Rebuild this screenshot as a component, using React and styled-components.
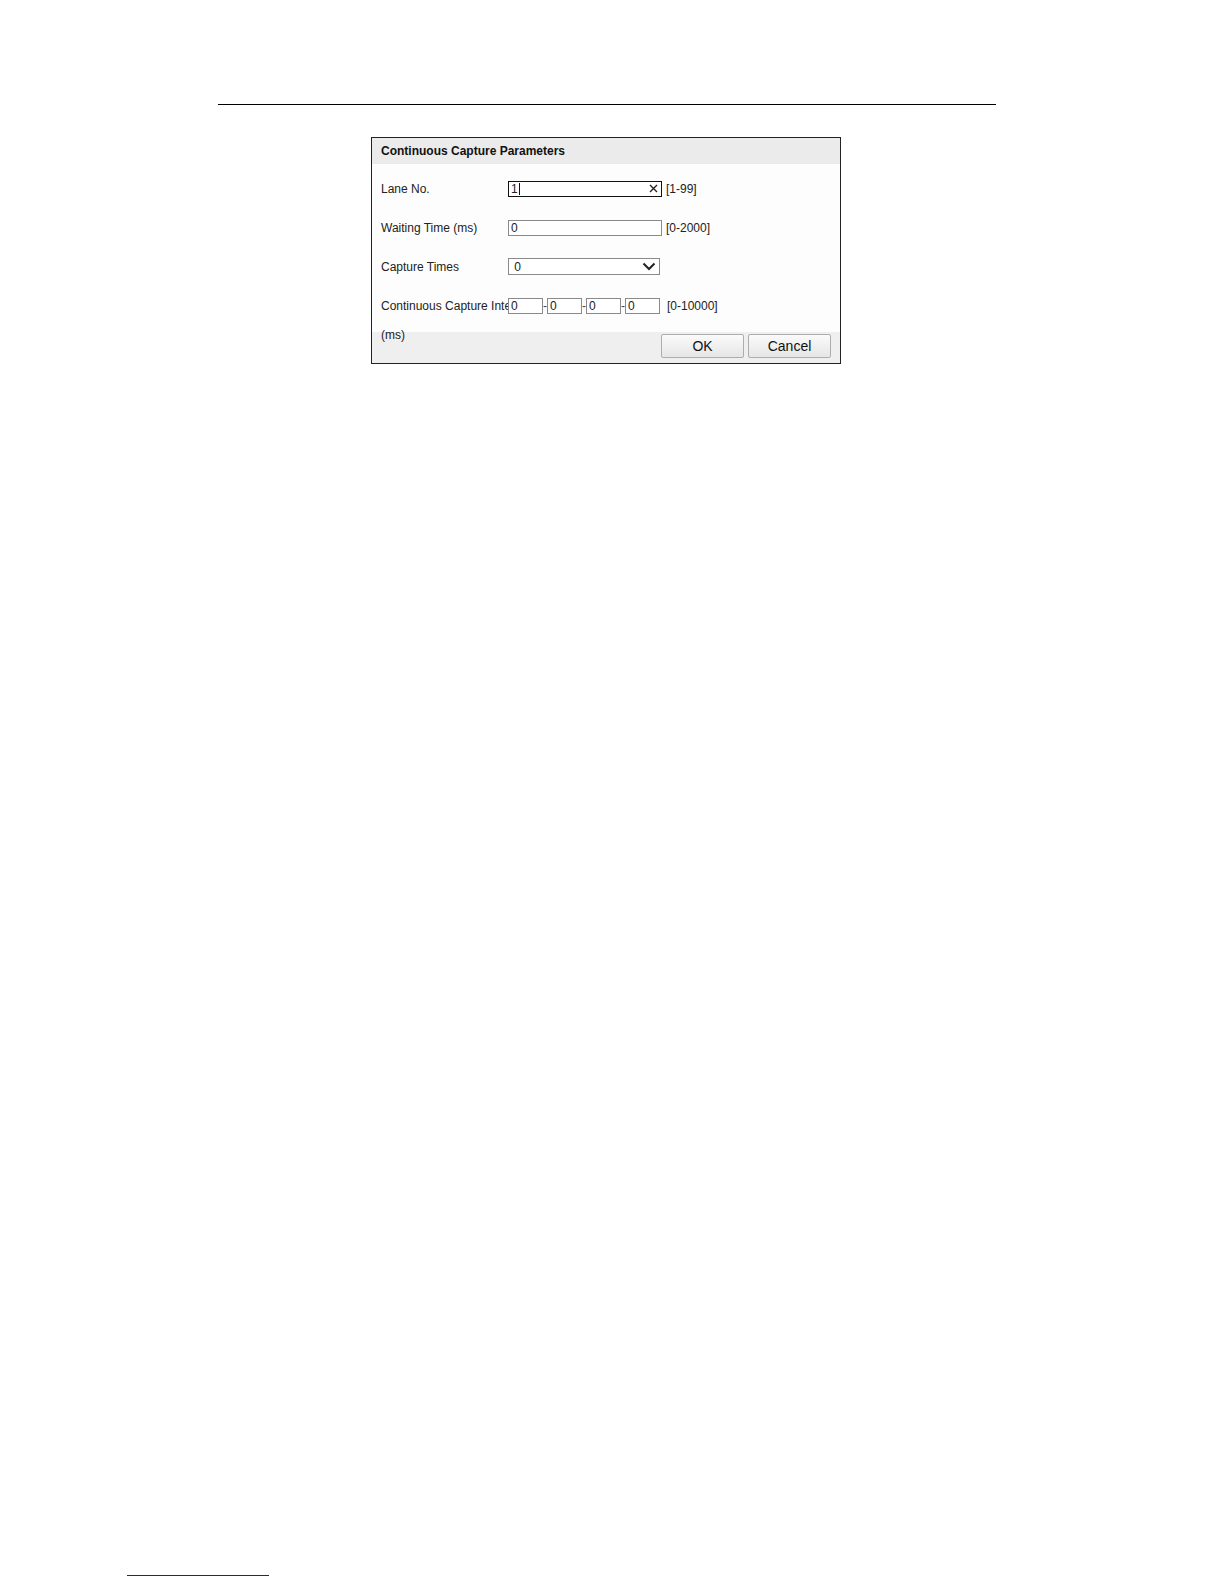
import React from "react";
import styled, { createGlobalStyle } from "styled-components";

const GlobalStyle = createGlobalStyle`
  html, body {
    margin: 0;
    padding: 0;
    background: #ffffff;
  }
  body {
    font-family: "Liberation Sans", Arial, sans-serif;
    color: #1a1a1a;
  }
`;

const Page = styled.div`
  width: 1224px;
  height: 1584px;
  display: flex;
  flex-direction: column;
  box-sizing: border-box;
  padding-top: 104px;
`;

const TopRule = styled.div`
  margin-left: 218px;
  width: 778px;
  height: 1px;
  background: #000;
`;

const BottomRule = styled.div`
  margin-top: auto;
  margin-bottom: 8px;
  margin-left: 127px;
  width: 142px;
  height: 1px;
  background: #1c1ca4;
`;

const Dialog = styled.div`
  margin-top: 32px;
  margin-left: 371px;
  width: 470px;
  box-sizing: border-box;
  border: 1px solid #222;
  background: #fdfdfd;
  font-size: 12px;
`;

const Header = styled.div`
  height: 26px;
  background: #ebebeb;
  padding-left: 9px;
  display: flex;
  align-items: center;
  font-weight: bold;
  color: #111;
`;

const Body = styled.div`
  padding: 5px 0 7px 9px;
`;

const Row = styled.div`
  height: 39px;
  display: flex;
  align-items: center;
`;

const Label = styled.div`
  width: 127px;
  flex-shrink: 0;
  color: #222;
  position: relative;
  z-index: 1;
  ${(p) =>
    p.$wrap &&
    `
    height: 14px;
    line-height: 14px;
    align-self: center;
    overflow: visible;
    white-space: nowrap;
    & > span { display: block; width: 127px; overflow: hidden; }
    & > span + span { margin-top: 15px; }
  `}
`;

const Field = styled.div`
  position: relative;
  width: ${(p) => p.$w}px;
  height: 16px;
  box-sizing: border-box;
  border: 1px solid ${(p) => (p.$focus ? "#111" : "#8a8a8a")};
  background: #fff;
  display: flex;
  align-items: center;
  padding-left: 2px;
  font-size: 12px;
  color: #222;
`;

const Caret = styled.span`
  display: inline-block;
  width: 1px;
  height: 12px;
  background: #111;
  margin-left: 1px;
`;

const Clear = styled.span`
  position: absolute;
  right: 3px;
  top: 0;
  height: 14px;
  display: flex;
  align-items: center;
`;

const Chevron = styled.span`
  position: absolute;
  right: 3px;
  top: 0;
  height: 15px;
  display: flex;
  align-items: center;
`;

const Hint = styled.span`
  margin-left: ${(p) => p.$ml || 4}px;
  color: #222;
`;

const Dash = styled.span`
  width: 4px;
  text-align: center;
  color: #444;
`;

const Footer = styled.div`
  height: 31px;
  background: #efefef;
  display: flex;
  justify-content: flex-end;
  align-items: flex-start;
  padding: 2px 9px 0 0;
  box-sizing: border-box;
  gap: 4px;
`;

const Button = styled.button`
  width: 83px;
  height: 24px;
  border: 1px solid #adadad;
  border-radius: 2px;
  background: linear-gradient(#fafafa, #e6e6e6);
  font-family: "Liberation Sans", Arial, sans-serif;
  font-size: 14px;
  color: #111;
  padding: 0;
`;

export default function App() {
  return (
    <Page>
      <GlobalStyle />
      <TopRule />
      <Dialog>
        <Header>Continuous Capture Parameters</Header>
        <Body>
          <Row>
            <Label>Lane No.</Label>
            <Field $w={154} $focus>
              1<Caret />
              <Clear>
                <svg width="9" height="9" viewBox="0 0 9 9">
                  <path d="M1 1L8 8M8 1L1 8" stroke="#222" strokeWidth="1.4" />
                </svg>
              </Clear>
            </Field>
            <Hint>[1-99]</Hint>
          </Row>
          <Row>
            <Label>Waiting Time (ms)</Label>
            <Field $w={154}>0</Field>
            <Hint>[0-2000]</Hint>
          </Row>
          <Row>
            <Label>Capture Times</Label>
            <Field $w={152} style={{ height: 17 }}>
              &nbsp;0
              <Chevron>
                <svg width="14" height="9" viewBox="0 0 14 9">
                  <path d="M1.5 1.5L7 7L12.5 1.5" fill="none" stroke="#222" strokeWidth="2" />
                </svg>
              </Chevron>
            </Field>
          </Row>
          <Row>
            <Label $wrap>
              <span>Continuous Capture Interval</span>
              <span>(ms)</span>
            </Label>
            <Field $w={35}>0</Field>
            <Dash>-</Dash>
            <Field $w={35}>0</Field>
            <Dash>-</Dash>
            <Field $w={35}>0</Field>
            <Dash>-</Dash>
            <Field $w={35}>0</Field>
            <Hint $ml={7}>[0-10000]</Hint>
          </Row>
        </Body>
        <Footer>
          <Button>OK</Button>
          <Button>Cancel</Button>
        </Footer>
      </Dialog>
      <BottomRule />
    </Page>
  );
}
